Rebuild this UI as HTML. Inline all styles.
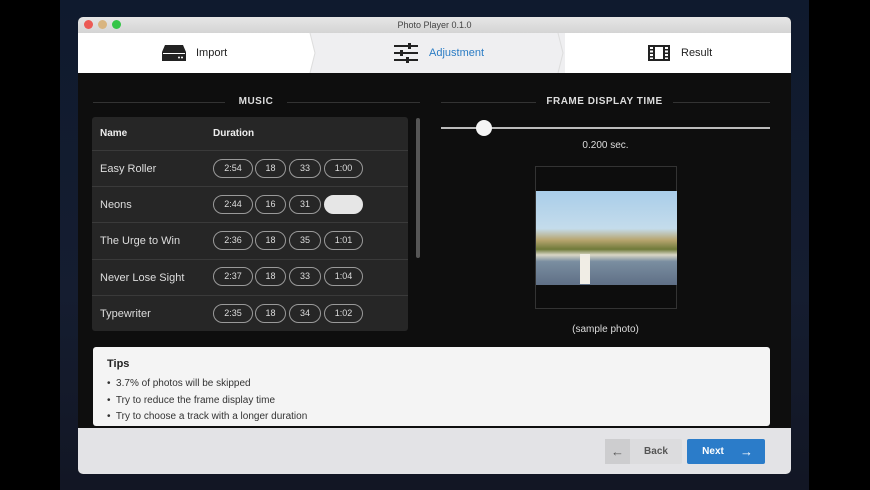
<!DOCTYPE html><html><head><style>
*{margin:0;padding:0;box-sizing:border-box}
body{width:870px;height:490px;overflow:hidden;background:#000;font-family:"Liberation Sans",sans-serif;position:relative}
.a{position:absolute}
.pill{position:absolute;height:19px;border:1.5px solid #9a9a9a;border-radius:10px;color:#ddd;font-size:9px;text-align:center;line-height:16px}
.row{position:absolute;left:92px;width:316px;height:36px;border-top:1px solid #3a3a3a}
.row span{position:absolute;left:8px;top:12px;color:#ddd;font-size:11px}
.tl{font-size:11px;color:#222;position:absolute}
</style></head><body>
<div class="a" style="left:60px;top:0;width:749px;height:490px;background:linear-gradient(#0f1a2e,#151d30 60%,#121624)"></div>
<div class="a" style="left:78px;top:17px;width:713px;height:457px;background:#0e0e0e;border-radius:5px;overflow:hidden">
 <div class="a" style="left:0;top:0;width:713px;height:16px;background:linear-gradient(#e6e6e6,#d4d4d4);text-align:center;font-size:9px;color:#444;line-height:16px">Photo Player 0.1.0</div>
 <div class="a" style="left:6px;top:3px;width:9px;height:9px;border-radius:50%;background:#ec5a55"></div>
 <div class="a" style="left:20px;top:3px;width:9px;height:9px;border-radius:50%;background:#d9b580"></div>
 <div class="a" style="left:34px;top:3px;width:9px;height:9px;border-radius:50%;background:#35c548"></div>
 <div class="a" style="left:0;top:16px;width:713px;height:40px;background:#fff"></div>
 <div class="a" style="left:232px;top:16px;width:255px;height:40px;background:#efeff1"></div>
 <svg class="a" style="left:225px;top:16px" width="270" height="40"><polyline points="7,0 12,20 7,40" fill="#fff" stroke="#ddd"/><polyline points="255,0 260,20 255,40" fill="#efeff1" stroke="#ddd"/></svg>
 <svg class="a" style="left:84px;top:28px" width="24" height="16"><path d="M3 0h18l3 7v9H0V7z" fill="#222"/><rect x="1" y="8" width="22" height="1" fill="#fff"/><circle cx="17" cy="12.5" r="1" fill="#fff"/><circle cx="20" cy="12.5" r="1" fill="#fff"/></svg>
 <div class="tl" style="left:118px;top:30px">Import</div>
 <svg class="a" style="left:316px;top:26px" width="24" height="20"><g fill="#222"><rect y="2" width="24" height="2"/><rect x="14" y="0" width="3" height="6"/><rect y="9" width="24" height="2"/><rect x="6" y="7" width="3" height="6"/><rect y="16" width="24" height="2"/><rect x="12" y="14" width="3" height="6"/></g></svg>
 <div class="tl" style="left:351px;top:30px;color:#2b7cc4">Adjustment</div>
 <svg class="a" style="left:570px;top:28px" width="22" height="16"><rect x="1" y="1" width="20" height="14" fill="none" stroke="#222" stroke-width="2"/><rect x="5" y="1" width="2" height="14" fill="#222"/><rect x="15" y="1" width="2" height="14" fill="#222"/><g fill="#222"><rect x="1" y="4" width="4" height="1.5"/><rect x="1" y="7.5" width="4" height="1.5"/><rect x="1" y="11" width="4" height="1.5"/><rect x="17" y="4" width="4" height="1.5"/><rect x="17" y="7.5" width="4" height="1.5"/><rect x="17" y="11" width="4" height="1.5"/></g></svg>
 <div class="tl" style="left:603px;top:30px">Result</div>
</div>
<div class="a" style="left:93px;top:102px;width:132px;height:1px;background:#333"></div>
<div class="a" style="left:287px;top:102px;width:133px;height:1px;background:#333"></div>
<div class="a" style="left:225px;top:96px;width:62px;text-align:center;color:#ddd;font-size:10px;font-weight:bold;letter-spacing:.5px">MUSIC</div>
<div class="a" style="left:441px;top:102px;width:95px;height:1px;background:#333"></div>
<div class="a" style="left:673px;top:102px;width:97px;height:1px;background:#333"></div>
<div class="a" style="left:536px;top:96px;width:137px;text-align:center;color:#ddd;font-size:10px;font-weight:bold;letter-spacing:.5px">FRAME DISPLAY TIME</div>
<div class="a" style="left:92px;top:117px;width:316px;height:214px;background:#262626;border-radius:3px"></div>
<div class="a" style="left:100px;top:128px;color:#eee;font-size:10px;font-weight:bold">Name</div>
<div class="a" style="left:213px;top:128px;color:#eee;font-size:10px;font-weight:bold">Duration</div>
<div class="row" style="top:150px"><span>Easy Roller</span></div>
<div class="row" style="top:186px"><span>Neons</span></div>
<div class="row" style="top:222px"><span>The Urge to Win</span></div>
<div class="row" style="top:259px"><span>Never Lose Sight</span></div>
<div class="row" style="top:295px"><span>Typewriter</span></div>
<div id="p"></div>
<div class="a" style="left:416px;top:118px;width:4px;height:140px;background:#555;border-radius:2px"></div>
<div class="a" style="left:441px;top:127px;width:329px;height:2px;background:#bbb"></div>
<div class="a" style="left:476px;top:120px;width:16px;height:16px;border-radius:50%;background:#f4f4f4"></div>
<div class="a" style="left:441px;top:140px;width:329px;text-align:center;color:#ddd;font-size:10px">0.200 sec.</div>
<div class="a" style="left:535px;top:166px;width:142px;height:143px;border:1px solid #333;background:#0d0d0d"></div>
<div class="a" style="left:536px;top:191px;width:141px;height:94px;background:linear-gradient(#a9cdea 0%,#c4dceb 40%,#b8a670 52%,#6f7a3a 62%,#d9d6c6 68%,#7a8ea0 75%,#5f6f86 100%)"></div>
<div class="a" style="left:580px;top:254px;width:10px;height:30px;background:#f0ede5"></div>
<div class="a" style="left:441px;top:324px;width:329px;text-align:center;color:#ddd;font-size:10px">(sample photo)</div>
<div class="a" style="left:93px;top:347px;width:677px;height:79px;background:#f4f4f4;border-radius:3px"></div>
<div class="a" style="left:107px;top:358px;font-size:11px;font-weight:bold;color:#222">Tips</div>
<div class="a" style="left:107px;top:376px;font-size:10px;color:#333;line-height:16.5px">•&nbsp; 3.7% of photos will be skipped<br>•&nbsp; Try to reduce the frame display time<br>•&nbsp; Try to choose a track with a longer duration</div>
<div class="a" style="left:78px;top:428px;width:713px;height:46px;background:#e3e3e6;border-radius:0 0 5px 5px"></div>
<div class="a" style="left:605px;top:439px;width:77px;height:25px;background:#dcdcde;border-radius:2px"></div>
<div class="a" style="left:605px;top:439px;width:25px;height:25px;background:#cdcdcf;color:#555;font-size:13px;text-align:center;line-height:25px;font-weight:bold">←</div>
<div class="a" style="left:630px;top:439px;width:52px;height:25px;line-height:25px;text-align:center;color:#555;font-size:10px;font-weight:bold">Back</div>
<div class="a" style="left:687px;top:439px;width:78px;height:25px;background:#2b7cc9;border-radius:2px"></div>
<div class="a" style="left:687px;top:439px;width:52px;height:25px;line-height:25px;text-align:center;color:#fff;font-size:10px;font-weight:bold">Next</div>
<div class="a" style="left:740px;top:439px;height:25px;line-height:25px;color:#fff;font-size:13px;font-weight:bold">→</div>
<script>
var d=[["2:54","18","33","1:00"],["2:44","16","31",""],["2:36","18","35","1:01"],["2:37","18","33","1:04"],["2:35","18","34","1:02"]];
var x=[[213,40],[255,31],[289,32],[324,39]],y=[159,195,231,267,304],h="";
d.forEach(function(r,i){r.forEach(function(t,j){var s=(i==1&&j==3)?"background:#e6e6e6;border-color:#e6e6e6;":"";h+='<div class="pill" style="'+s+'left:'+x[j][0]+'px;top:'+y[i]+'px;width:'+x[j][1]+'px">'+t+'</div>';});});
document.getElementById("p").innerHTML=h;
</script>
</body></html>
